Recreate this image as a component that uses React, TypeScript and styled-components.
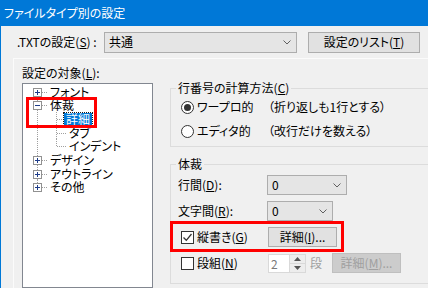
import React from "react";
import styled, { createGlobalStyle } from "styled-components";

const GlobalStyle = createGlobalStyle`
  html, body {
    margin: 0;
    padding: 0;
    background: #f0f0f0;
    overflow: hidden;
  }
  body {
    font-family: "Noto Sans CJK JP", "Noto Sans", sans-serif;
    font-size: 12px;
    font-feature-settings: "palt";
    color: #000;
  }
  u {
    text-underline-offset: 1px;
  }
`;

const Window = styled.div`
  position: relative;
  width: 428px;
  height: 288px;
  overflow: hidden;
  display: flex;
  flex-direction: column;
`;

const TitleBar = styled.div`
  flex: none;
  height: 26px;
  background: #0078d7;
  color: #fff;
  display: flex;
  align-items: center;
  padding-left: 4px;
  line-height: 14px;
`;

const Body = styled.div`
  flex: 1;
  min-height: 0;
  border-left: 1px solid #0078d7;
  display: flex;
  flex-direction: column;
`;

const TopRow = styled.div`
  flex: none;
  height: 32px;
  display: flex;
  align-items: center;
  padding-left: 16px;
`;

const Label = styled.span<{ $width?: number; $indent?: number; $muted?: boolean; $gap?: number }>`
  flex: none;
  width: ${({ $width }) => ($width ? `${$width}px` : "auto")};
  padding-left: ${({ $indent }) => $indent ?? 0}px;
  margin-left: ${({ $gap }) => $gap ?? 0}px;
  box-sizing: border-box;
  line-height: 14px;
  white-space: nowrap;
  color: ${({ $muted }) => ($muted ? "#a0a0a0" : "#000")};
`;

const Combo = styled.div<{ $width: number; $height?: number; $shift?: number }>`
  flex: none;
  width: ${({ $width }) => $width}px;
  height: ${({ $height }) => $height ?? 21}px;
  margin-left: ${({ $shift }) => $shift ?? 0}px;
  box-sizing: border-box;
  border: 1px solid #adadad;
  background: #e5e5e5;
  display: flex;
  align-items: center;
  justify-content: space-between;
  padding: 0 5px 0 4px;
  line-height: 14px;
`;

const PushButton = styled.div<{ $width: number; $height?: number; $disabled?: boolean; $gap?: number }>`
  flex: none;
  width: ${({ $width }) => $width}px;
  height: ${({ $height }) => $height ?? 21}px;
  margin-left: ${({ $gap }) => $gap ?? 0}px;
  box-sizing: border-box;
  border: 1px solid ${({ $disabled }) => ($disabled ? "#bfbfbf" : "#adadad")};
  background: ${({ $disabled }) => ($disabled ? "#cccccc" : "#e1e1e1")};
  color: ${({ $disabled }) => ($disabled ? "#a0a0a0" : "#000")};
  display: flex;
  align-items: center;
  justify-content: center;
  line-height: 14px;
  white-space: nowrap;
`;

const Panel = styled.div`
  flex: 1;
  min-height: 0;
  margin-left: 12px;
  border-top: 1px solid #fbfbfb;
  border-left: 1px solid #fbfbfb;
  display: flex;
  padding-left: 8px;
`;

const LeftColumn = styled.div`
  flex: none;
  width: 131px;
  display: flex;
  flex-direction: column;
  padding-top: 7px;
`;

const Tree = styled.div`
  margin-top: 3px;
  flex: 1;
  border: 1px solid #828790;
  background: #fff;
  padding: 1px 0 0 5px;
`;

const TreeRow = styled.div`
  height: 13.65px;
  display: flex;
  align-items: center;
`;

const GuideSvg = styled.svg`
  display: block;
  flex: none;
  overflow: visible;
`;

const TreeText = styled.span<{ $selected?: boolean }>`
  margin-left: ${({ $selected }) => ($selected ? -2 : 1)}px;
  padding: 0 2px;
  height: 12px;
  line-height: 12px;
  white-space: nowrap;
  background: ${({ $selected }) => ($selected ? "#0078d7" : "transparent")};
  color: ${({ $selected }) => ($selected ? "#fff" : "#000")};
  outline: ${({ $selected }) => ($selected ? "1px dotted #1a1a1a" : "none")};
`;

const RightColumn = styled.div`
  flex: none;
  margin-left: 17px;
  padding-top: 22px;
  display: flex;
  flex-direction: column;
  gap: 10px;
`;

const Group = styled.fieldset<{ $height: number }>`
  margin: 0;
  padding: 0;
  width: 270px;
  height: ${({ $height }) => $height}px;
  box-sizing: border-box;
  border: 1px solid #dcdcdc;
  min-width: 0;
`;

const Legend = styled.legend`
  margin-left: 5px;
  padding: 0 2px;
  line-height: 14px;
`;

const RadioGrid = styled.div`
  display: grid;
  grid-template-columns: 87px auto;
  grid-auto-rows: 20px;
  row-gap: 4px;
  align-items: center;
  padding: 2px 0 0 10px;
`;

const Choice = styled.div`
  display: flex;
  align-items: center;
  gap: 3px;
`;

const Radio = styled.span`
  flex: none;
  width: 13px;
  height: 13px;
  box-sizing: border-box;
  border: 1px solid #333;
  border-radius: 50%;
  background: #fff;
  display: flex;
  align-items: center;
  justify-content: center;
`;

const RadioDot = styled.span`
  width: 7px;
  height: 7px;
  border-radius: 50%;
  background: #333;
`;

const CheckBox = styled.span`
  flex: none;
  width: 13px;
  height: 13px;
  box-sizing: border-box;
  border: 1px solid #333;
  background: #fff;
  display: flex;
  align-items: center;
  justify-content: center;
`;

const FormGrid = styled.div`
  display: grid;
  grid-template-columns: 96px auto;
  grid-auto-rows: 26px;
  align-items: center;
  padding-top: 1px;
`;

const CheckCell = styled.div`
  display: flex;
  align-items: center;
  gap: 3px;
  padding-left: 10px;
`;

const Controls = styled.div`
  display: flex;
  align-items: center;
  padding-left: 1px;
`;

const Spin = styled.div`
  display: flex;
  height: 19px;
  border: 1px solid #d9d9d9;
  background: #fff;
  box-sizing: border-box;
`;

const SpinValue = styled.span`
  width: 20px;
  padding-left: 2px;
  box-sizing: border-box;
  color: #7a7a7a;
  line-height: 17px;
`;

const SpinButtons = styled.div`
  width: 15px;
  display: flex;
  flex-direction: column;
  border-left: 1px solid #d9d9d9;
`;

const SpinButton = styled.div`
  flex: 1;
  background: #ededed;
  display: flex;
  align-items: center;
  justify-content: center;
  & + & {
    border-top: 1px solid #d9d9d9;
  }
`;

const Annotation = styled.div<{ $x: number; $y: number; $w: number; $h: number }>`
  position: absolute;
  left: ${({ $x }) => $x}px;
  top: ${({ $y }) => $y}px;
  width: ${({ $w }) => $w}px;
  height: ${({ $h }) => $h}px;
  box-sizing: border-box;
  border: 3px solid #f00;
  pointer-events: none;
`;

const Chevron = () => (
  <svg width="8" height="5" viewBox="0 0 8 5">
    <path d="M0.5 0.5 L4 4 L7.5 0.5" fill="none" stroke="#606060" strokeWidth="1" />
  </svg>
);

const CheckMark = () => (
  <svg width="11" height="11" viewBox="0 0 11 11">
    <path d="M1.5 5.5 L4.3 8.3 L9.5 2" fill="none" stroke="#333" strokeWidth="1.3" />
  </svg>
);

type Vert = "full" | "top" | "bottom" | "none";

const DOT = { stroke: "#a0a0a0", strokeWidth: 1, strokeDasharray: "1 1" };

const Guide = ({ v, h, box }: { v: Vert; h?: boolean; box?: "plus" | "minus" }) => (
  <GuideSvg width="19" height="14">
    {v !== "none" && (
      <line x1="9.5" x2="9.5" y1={v === "bottom" ? 7 : 0} y2={v === "top" ? 8 : 14} {...DOT} />
    )}
    {h && <line x1={box ? 14 : 10} x2="19" y1="7.5" y2="7.5" {...DOT} />}
    {box && (
      <>
        <rect x="5.5" y="3.5" width="8" height="8" fill="#fff" stroke="#919191" />
        <line x1="7" x2="12" y1="7.5" y2="7.5" stroke="#1f3d8a" />
        {box === "plus" && <line x1="9.5" x2="9.5" y1="5" y2="10" stroke="#1f3d8a" />}
      </>
    )}
  </GuideSvg>
);

type Node = { label: string; level: 0 | 1; box?: "plus" | "minus"; v: Vert; selected?: boolean };

const nodes: Node[] = [
  { label: "フォント", level: 0, box: "plus", v: "bottom" },
  { label: "体裁", level: 0, box: "minus", v: "full" },
  { label: "詳細", level: 1, v: "full", selected: true },
  { label: "タブ", level: 1, v: "full" },
  { label: "インデント", level: 1, v: "top" },
  { label: "デザイン", level: 0, box: "plus", v: "full" },
  { label: "アウトライン", level: 0, box: "plus", v: "full" },
  { label: "その他", level: 0, box: "plus", v: "top" },
];

export default function App() {
  return (
    <Window>
      <GlobalStyle />
      <TitleBar>ファイルタイプ別の設定</TitleBar>
      <Body>
        <TopRow>
          <Label $width={87}>
            .TXTの設定(<u>S</u>) :
          </Label>
          <Combo $width={193}>
            <span>共通</span>
            <Chevron />
          </Combo>
          <PushButton $width={112} $gap={11}>
            設定のリスト(<u>T</u>)
          </PushButton>
        </TopRow>

        <Panel>
          <LeftColumn>
            <Label>
              設定の対象(<u>L</u>):
            </Label>
            <Tree>
              {nodes.map((n) => (
                <TreeRow key={n.label}>
                  {n.level === 0 ? (
                    <Guide v={n.v} h box={n.box} />
                  ) : (
                    <>
                      <Guide v="full" />
                      <Guide v={n.v} h />
                    </>
                  )}
                  <TreeText $selected={n.selected}>{n.label}</TreeText>
                </TreeRow>
              ))}
            </Tree>
          </LeftColumn>

          <RightColumn>
            <Group $height={66}>
              <Legend>
                行番号の計算方法(<u>C</u>)
              </Legend>
              <RadioGrid>
                <Choice>
                  <Radio>
                    <RadioDot />
                  </Radio>
                  <Label>ワープロ的</Label>
                </Choice>
                <Label>（折り返しも1行とする）</Label>
                <Choice>
                  <Radio />
                  <Label>エディタ的</Label>
                </Choice>
                <Label>（改行だけを数える）</Label>
              </RadioGrid>
            </Group>

            <Group $height={127}>
              <Legend>体裁</Legend>
              <FormGrid>
                <Label $indent={7}>
                  行間(<u>D</u>):
                </Label>
                <Controls>
                  <Combo $width={80} $height={20} $shift={-1}>
                    <span>0</span>
                    <Chevron />
                  </Combo>
                </Controls>

                <Label $indent={7}>
                  文字間(<u>R</u>):
                </Label>
                <Controls>
                  <Combo $width={66} $height={20} $shift={-1}>
                    <span>0</span>
                    <Chevron />
                  </Combo>
                </Controls>

                <CheckCell>
                  <CheckBox>
                    <CheckMark />
                  </CheckBox>
                  <Label>
                    縦書き(<u>G</u>)
                  </Label>
                </CheckCell>
                <Controls>
                  <PushButton $width={69} $height={20}>
                    詳細(<u>I</u>)...
                  </PushButton>
                </Controls>

                <CheckCell>
                  <CheckBox />
                  <Label>
                    段組(<u>N</u>)
                  </Label>
                </CheckCell>
                <Controls>
                  <Spin>
                    <SpinValue>2</SpinValue>
                    <SpinButtons>
                      <SpinButton>
                        <svg width="7" height="4" viewBox="0 0 7 4">
                          <path d="M0 4 L3.5 0 L7 4 Z" fill="#555" />
                        </svg>
                      </SpinButton>
                      <SpinButton>
                        <svg width="7" height="4" viewBox="0 0 7 4">
                          <path d="M0 0 L3.5 4 L7 0 Z" fill="#555" />
                        </svg>
                      </SpinButton>
                    </SpinButtons>
                  </Spin>
                  <Label $muted $gap={4}>
                    段
                  </Label>
                  <PushButton $width={69} $height={20} $disabled $gap={10}>
                    詳細(<u>M</u>)...
                  </PushButton>
                </Controls>
              </FormGrid>
            </Group>
          </RightColumn>
        </Panel>
      </Body>
      <Annotation $x={26} $y={97} $w={71} $h={31} />
      <Annotation $x={170} $y={221} $w={174} $h={31} />
    </Window>
  );
}
